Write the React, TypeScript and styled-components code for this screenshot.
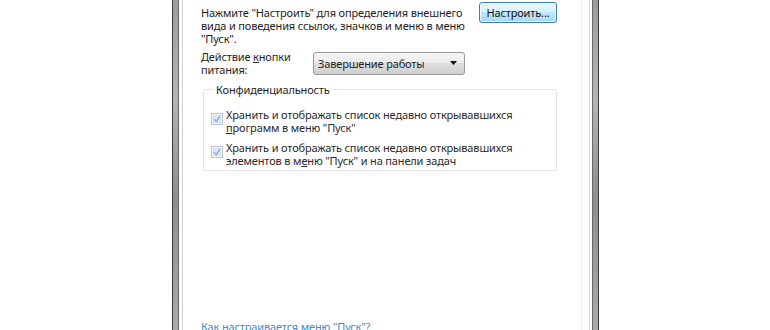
import React from 'react'
import styled, { createGlobalStyle } from 'styled-components'

const GlobalStyle = createGlobalStyle`
  html, body {
    margin: 0;
    padding: 0;
    background: #ffffff;
  }
  body {
    font-family: 'Noto Sans', 'Open Sans', Arial, sans-serif;
    font-size: 11px;
    letter-spacing: -0.15px;
    color: #1e1e1e;
  }
`

const Page = styled.div`
  width: 770px;
  height: 330px;
  overflow: hidden;
  display: flex;
`

const Window = styled.div`
  margin-left: 172px;
  width: 427px;
  height: 330px;
  display: flex;
`

interface FrameProps {
  side: 'left' | 'right'
}

// dark bar of the window border
const FrameBar = styled.div<FrameProps>`
  width: 5px;
  background: linear-gradient(to bottom, #9c9c9c, #b4b4b4 30%, #8e8e8e 60%, #aaaaaa);
  border-left: 1px solid ${(p) => (p.side === 'left' ? '#3c3c3c' : '#6a6a6a')};
  border-right: 1px solid ${(p) => (p.side === 'left' ? '#6a6a6a' : '#3c3c3c')};
`

const FrameInner = styled.div<FrameProps>`
  width: ${(p) => (p.side === 'left' ? '3px' : '2px')};
  background: #fafafa;
  border-${(p) => (p.side === 'left' ? 'right' : 'left')}: 1px solid #d4d4d4;
`

const Content = styled.div`
  flex: 1;
  display: flex;
  flex-direction: column;
  padding-left: 18px;
  border-right: 1px solid #ececec;
  margin-right: 7px;
  white-space: nowrap;
`

const TopRow = styled.div`
  display: flex;
  align-items: flex-start;
`

const Intro = styled.p`
  margin: 6px 0 0;
  width: 262px;
  line-height: 13px;
`

const Button = styled.button`
  margin: 2px 0 0 16px;
  width: 78px;
  height: 21px;
  padding: 0;
  font: inherit;
  letter-spacing: -0.15px;
  color: #111;
  border: 1px solid #3c7fb1;
  border-radius: 3px;
  box-shadow: inset 0 0 0 1px #e8f6fd;
  background: linear-gradient(to bottom, #eaf6fd 0%, #d9f0fc 45%, #bee6fd 50%, #a7d9f5 100%);
`

const PowerRow = styled.div`
  display: flex;
  align-items: center;
  margin-top: 5px;
`

const Label = styled.div`
  width: 112px;
  line-height: 13px;
`

const Select = styled.div`
  width: 152px;
  height: 23px;
  box-sizing: border-box;
  display: flex;
  align-items: center;
  justify-content: space-between;
  padding: 0 7px 0 4px;
  border: 1px solid #9a9a9a;
  border-radius: 3px;
  background: linear-gradient(to bottom, #f6f6f6 0%, #ebebeb 45%, #dddddd 50%, #cfcfcf 100%);
`

const Group = styled.fieldset`
  margin: 7px 0 0 2px;
  width: 354px;
  box-sizing: border-box;
  padding: 5px 0 3px 7px;
  border: 1px solid #e2e2e2;
  border-radius: 3px;
`

const Legend = styled.legend`
  padding: 0 2px;
  margin-left: 3px;
  line-height: 13px;
`

const CheckRow = styled.div<{ first?: boolean }>`
  display: flex;
  align-items: flex-start;
  margin-top: ${(p) => (p.first ? '7px' : '7px')};
`

const CheckText = styled.div`
  margin-left: 3px;
  line-height: 13px;
  color: #2a2a2a;
`

const Link = styled.a`
  margin-top: auto;
  margin-bottom: -3px;
  color: #3f8bcf;
  text-decoration: none;
  line-height: 13px;
`

const CheckBox = () => (
  <svg width="12" height="12" viewBox="0 0 12 12" style={{ flex: 'none', marginTop: 5 }}>
    <rect x="0.5" y="0.5" width="11" height="11" fill="#f4f6f8" stroke="#b8c4d2" />
    <rect x="2.5" y="2.5" width="7" height="7" fill="#e6ecf3" stroke="#d6dee8" />
    <path d="M3.2 6 L5.2 8.5 L9 3.2" fill="none" stroke="#8fb2dc" strokeWidth="1.5" />
  </svg>
)

const Arrow = () => (
  <svg width="7" height="4" viewBox="0 0 7 4">
    <path d="M0 0 H7 L3.5 4 Z" fill="#111" />
  </svg>
)

const App: React.FC = () => {
  return (
    <Page>
      <GlobalStyle />
      <Window>
        <FrameBar side="left" />
        <FrameInner side="left" />
        <Content>
          <TopRow>
            <Intro>
              Нажмите "Настроить" для определения внешнего
              <br />
              вида и поведения ссылок, значков и меню в меню
              <br />
              "Пуск".
            </Intro>
            <Button>Настроить...</Button>
          </TopRow>

          <PowerRow>
            <Label>
              Действие <u>к</u>нопки
              <br />
              питания:
            </Label>
            <Select>
              <span>Завершение работы</span>
              <Arrow />
            </Select>
          </PowerRow>

          <Group>
            <Legend>Конфиденциальность</Legend>
            <CheckRow first>
              <CheckBox />
              <CheckText>
                Хранить и отображать список недавно открывавшихся
                <br />
                <u>п</u>рограмм в меню "Пуск"
              </CheckText>
            </CheckRow>
            <CheckRow>
              <CheckBox />
              <CheckText>
                Хранить и отображать список недавно открывавшихся
                <br />
                элементов в м<u>е</u>ню "Пуск" и на панели задач
              </CheckText>
            </CheckRow>
          </Group>

          <Link href="#">Как настраивается меню "Пуск"?</Link>
        </Content>
        <FrameInner side="right" />
        <FrameBar side="right" />
      </Window>
    </Page>
  )
}

export default App
